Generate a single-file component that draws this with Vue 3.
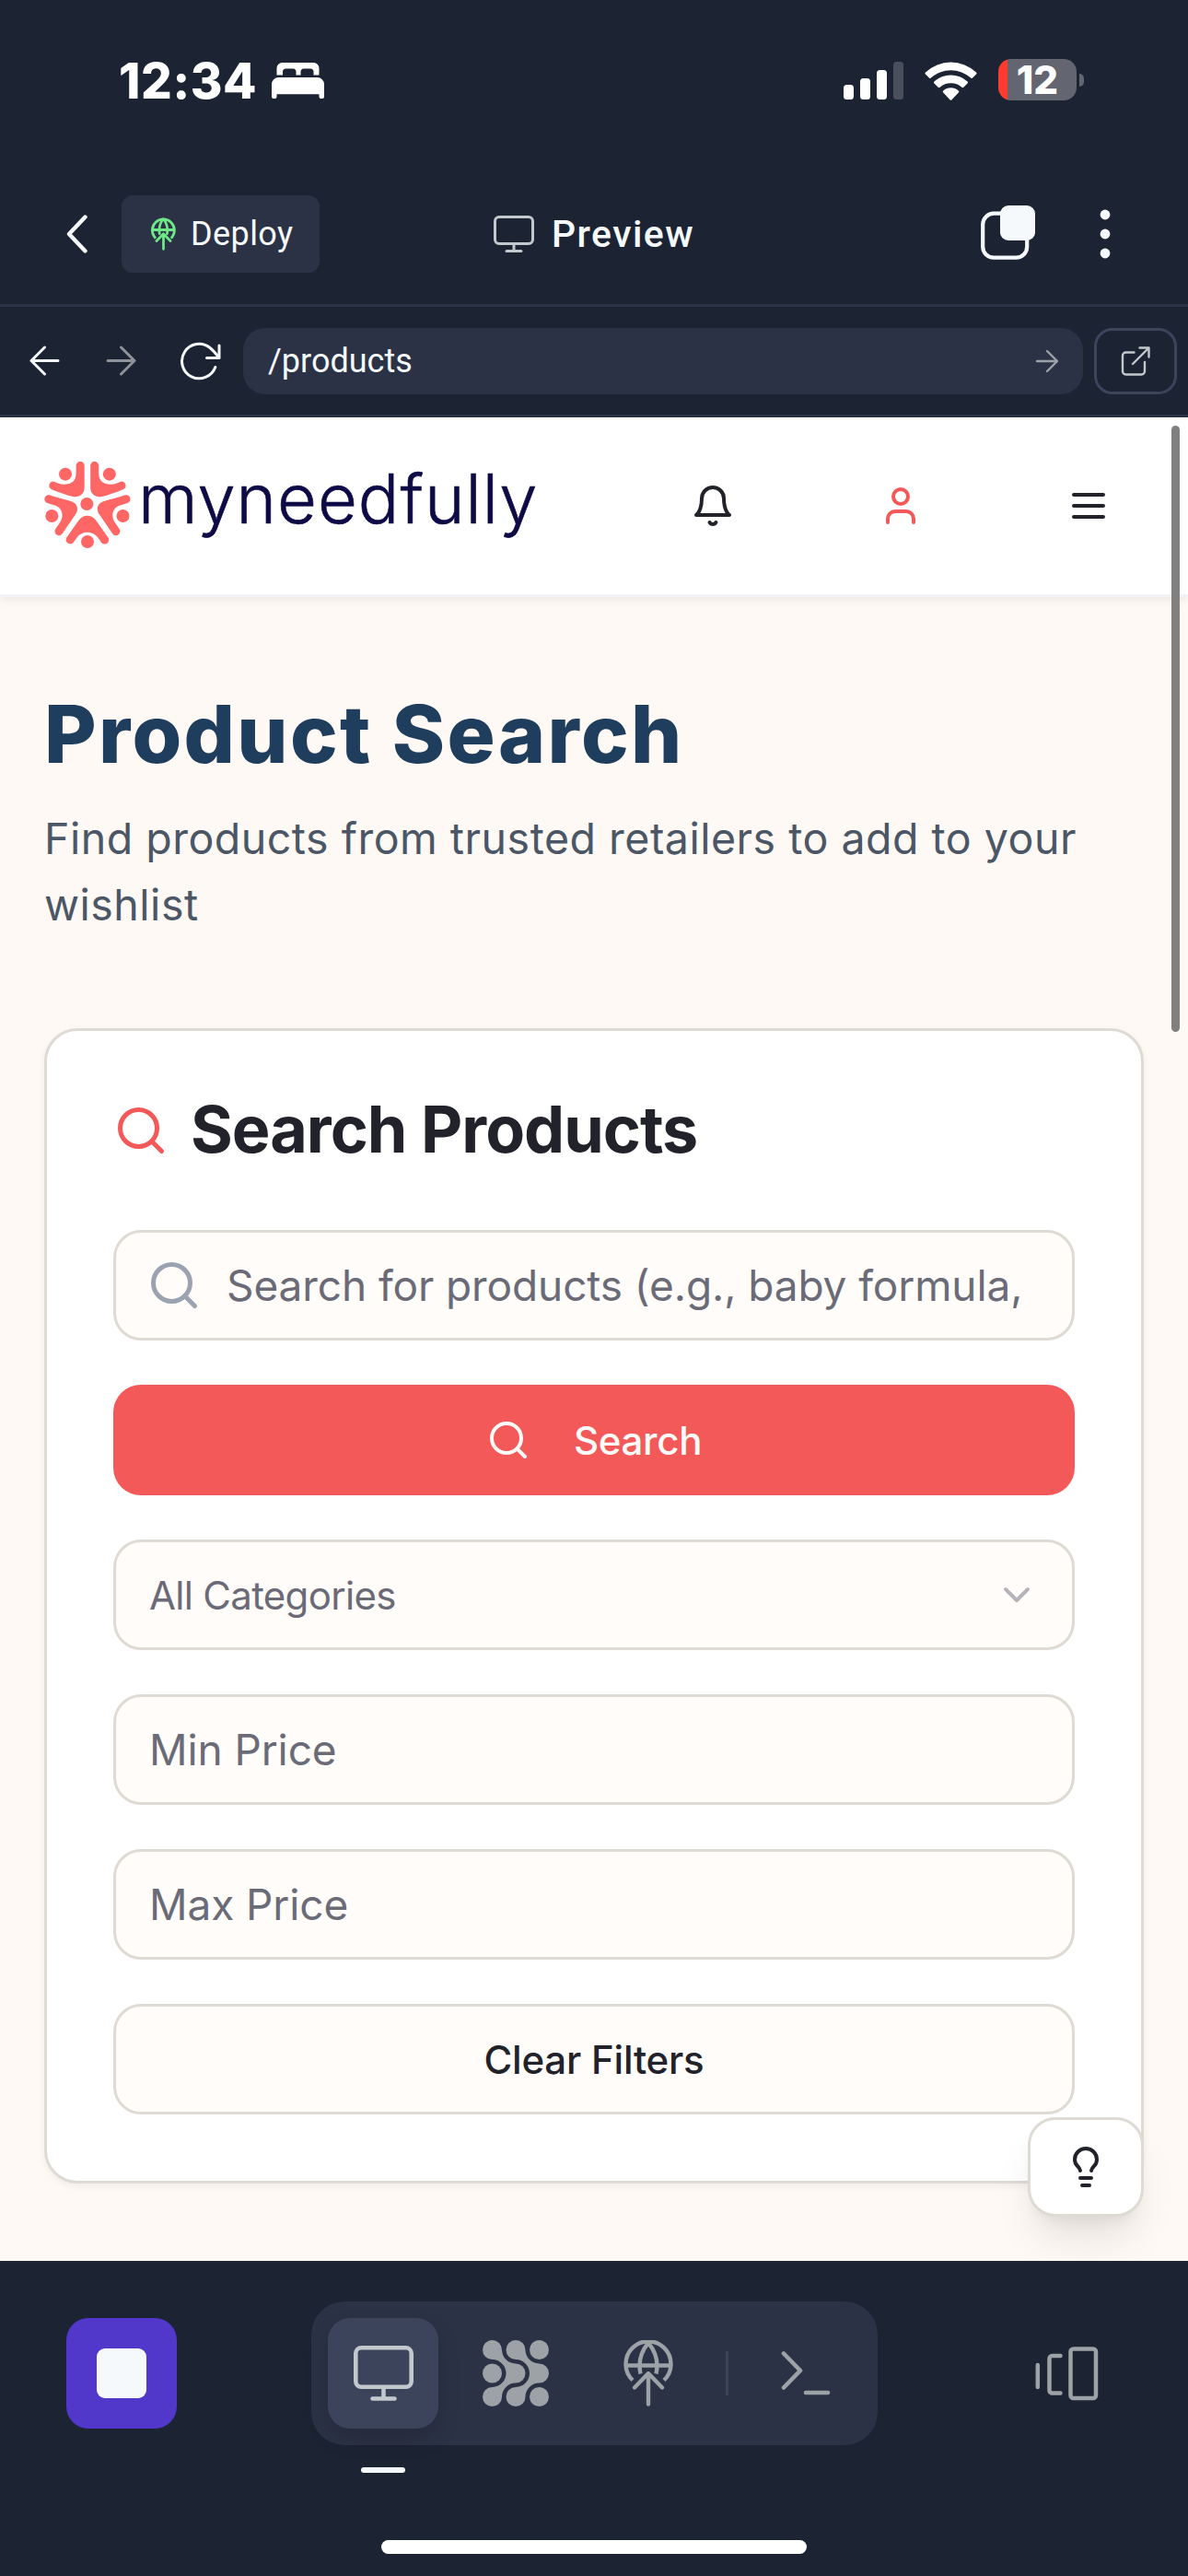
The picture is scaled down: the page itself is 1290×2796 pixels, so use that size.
<script setup>
const priceFields = ['Min Price', 'Max Price']
const signal = [
  { h: 16, on: true },
  { h: 23, on: true },
  { h: 32, on: true },
  { h: 41, on: false },
]
</script>

<template>
  <div class="phone">
    <!-- System status -->
    <div class="status">
      <span class="time">12:34</span>
      <svg class="bed" width="57" height="40" viewBox="0 0 57 40" fill="#fff">
        <path d="M5.5 13.500V6a6 6 0 0 1 6-6h34a6 6 0 0 1 6 6v7.500h-6v-3.500a3.500 3.500 0 0 0-3.500-3.500h-7a3.500 3.500 0 0 0-3.500 3.500v3.500h-5v-3.500a3.500 3.500 0 0 0-3.500-3.500h-7.500a3.500 3.500 0 0 0-3.500 3.500v3.500z" />
        <path d="M0 37v-13.500a7.500 7.500 0 0 1 7.500-7.500h42a7.500 7.500 0 0 1 7.500 7.500v13.500a2 2 0 0 1-2 2h-1.500a2 2 0 0 1-2-2v-2.700h-46v2.700a2 2 0 0 1-2 2h-1.500a2 2 0 0 1-2-2z" />
      </svg>
      <div class="signal">
        <i v-for="s in signal" :key="s.h" :class="{ off: !s.on }" :style="{ height: s.h + 'px' }"></i>
      </div>
      <svg class="wifi" width="57" height="42" viewBox="0 0 57 42" fill="#fff">
        <path d="M1 11.500a40 40 0 0 1 55 0a1.300 1.300 0 0 1 .1 1.900l-4 4.200a1.300 1.300 0 0 1-1.900 0a32.500 32.500 0 0 0-43.400 0a1.300 1.300 0 0 1-1.900 0l-4-4.200a1.300 1.300 0 0 1 .1-1.900z" />
        <path d="M10.500 21.600a26.500 26.500 0 0 1 36 0a1.300 1.300 0 0 1 0 1.900l-4.200 4.300a1.400 1.400 0 0 1-1.900 0a18 18 0 0 0-23.800 0a1.400 1.400 0 0 1-1.900 0l-4.200-4.300a1.300 1.300 0 0 1 0-1.900z" />
        <path d="M20.200 31.500a12.500 12.500 0 0 1 16.600 0a1.300 1.300 0 0 1 0 1.900l-7.300 7.800a1.400 1.400 0 0 1-2 0l-7.300-7.800a1.300 1.300 0 0 1 0-1.900z" />
      </svg>
      <div class="battery"><span>12</span></div>
      <i class="nub"></i>
    </div>

    <!-- App header -->
    <div class="apphead">
      <div class="side">
        <svg width="24" height="42" viewBox="0 0 24 42" class="line" stroke="#f5f9fc" stroke-width="4.400"><path d="M20.500 2.500L3 21l17.500 18.500" /></svg>
        <button class="deploy">
          <svg width="27" height="36" viewBox="0 0 54 72" class="line" stroke="#6ee787" stroke-width="5.600">
            <path d="M8.500 43.500a24 24 0 1 1 36.500 0M3 27h48M18.500 35c-2-12 1-23 8.200-32c7.200 9 10.200 20 8.200 32M12 51l15-15.500l15 15.500M27 36v32.500" />
          </svg>
          <span>Deploy</span>
        </button>
      </div>
      <div class="title">
        <svg width="44" height="41" viewBox="0 0 44 41" class="line" stroke="#c2c8cc" stroke-width="3"><rect x="1.500" y="1.500" width="41" height="29" rx="4.500" /><path d="M22 30.500v8M14 38.500h16" /></svg>
        <span>Preview</span>
      </div>
      <div class="side right">
        <svg width="59" height="60" viewBox="0 0 59 60">
          <rect x="2.200" y="8.700" width="48" height="48" rx="12" fill="none" stroke="#f5f9fc" stroke-width="4.200" />
          <rect x="21" y="0" width="38" height="38" rx="9" fill="#f5f9fc" />
        </svg>
        <svg width="12" height="54" viewBox="0 0 12 54" fill="#f5f9fc"><circle cx="6" cy="6" r="5.400" /><circle cx="6" cy="27" r="5.400" /><circle cx="6" cy="48" r="5.400" /></svg>
      </div>
    </div>

    <!-- Address bar -->
    <div class="toolbar">
      <svg width="33" height="33" viewBox="0 0 33 33" class="line" stroke="#f5f9fc" stroke-width="3"><path d="M16.500 2L2 16.500l14.500 14.500M2 16.500h29" /></svg>
      <svg class="line fwd" width="33" height="33" viewBox="0 0 33 33" stroke="#8f9298" stroke-width="3"><path d="M16.500 2L31 16.500l-14.500 14.500M31 16.500h-29" /></svg>
      <svg class="line reload" width="45" height="42" viewBox="0 0 45 42" stroke="#f5f9fc" stroke-width="3"><path d="M38.800 27.500A18.700 18.700 0 1 1 33 6.500c3.500 2.700 6.500 6.500 10 11M43 4v13.500h-13.500" /></svg>
      <div class="url">
        <span>/products</span>
        <svg width="26" height="26" viewBox="0 0 26 26" class="line" stroke="#9da2a6" stroke-width="2.400"><path d="M13 2l11 11l-11 11M24 13h-22" /></svg>
      </div>
      <button class="open">
        <svg width="32" height="32" viewBox="0 0 32 32" class="line" stroke="#c2c8cc" stroke-width="2.400"><path d="M14.500 6.500h-9a3.500 3.500 0 0 0-3.500 3.500v17a3.500 3.500 0 0 0 3.500 3.500h17a3.500 3.500 0 0 0 3.500-3.500v-10M13 19l17.500-17.500M20.500 1.500h10v10" /></svg>
      </button>
    </div>

    <!-- Previewed site -->
    <div class="site">
      <header class="sitehead">
        <div class="brand">
          <svg width="94" height="94" viewBox="54 63 282 282" fill="#ff6666">
            <g id="arm">
              <path d="M158 76a13.500 13.500 0 0 1 27 0v72c0 22-18 33-38 29c-12-2-48-15-70-24a13.500 13.500 0 0 1 9-25c10 3 18 9 32 9c26 0 40-11 40-38z" />
              <path d="M71 172c25 8 50 14 72 21c20 7 24 26 13 42l-43 63a13.500 13.500 0 0 1-22-16l14-20c16-24 6-52-20-57l-23-8a13.500 13.500 0 0 1 9-25z" />
              <circle cx="123" cy="104" r="21" /><circle cx="79" cy="240" r="21" />
            </g>
            <use href="#arm" transform="translate(389.500 0) scale(-1 1)" />
            <path d="M128 309l38-54c14-21 43-21 57 0l39 55a13.500 13.500 0 0 1-22 16l-10-14c-17-24-53-25-70-1l-11 15a13.500 13.500 0 0 1-21-17z" />
            <circle cx="193" cy="201" r="21" /><circle cx="195" cy="324" r="21" />
          </svg>
          <span>myneedfully</span>
        </div>
        <svg width="48" height="48" viewBox="0 0 24 24" class="line" stroke="#22222a" stroke-width="2"><path d="M6 8a6 6 0 0 1 12 0c0 7 3 9 3 9H3s3-2 3-9M10.300 21a1.940 1.940 0 0 0 3.400 0" /></svg>
        <svg width="48" height="48" viewBox="0 0 24 24" class="line" stroke="#f35959" stroke-width="2"><path d="M19 21v-2a4 4 0 0 0-4-4H9a4 4 0 0 0-4 4v2" /><circle cx="12" cy="7" r="4" /></svg>
        <svg width="48" height="48" viewBox="0 0 24 24" class="line" stroke="#22222a" stroke-width="2"><path d="M4 12h16M4 6h16M4 18h16" /></svg>
      </header>

      <main>
        <h1>Product Search</h1>
        <p>Find products from trusted retailers to add to your wishlist</p>

        <section class="card">
          <h2>
            <svg width="60" height="60" viewBox="0 0 24 24" class="line" stroke="#f35959" stroke-width="2"><circle cx="11" cy="11" r="8" /><path d="M21 21l-4.300-4.300" /></svg>
            <span>Search Products</span>
          </h2>
          <div class="field query">
            <svg width="60" height="60" viewBox="0 0 24 24" class="line" stroke="#9ca3b0" stroke-width="2"><circle cx="11" cy="11" r="8" /><path d="M21 21l-4.300-4.300" /></svg>
            <span>Search for products (e.g., baby formula,</span>
          </div>
          <button class="field primary">
            <svg width="48" height="48" viewBox="0 0 24 24" class="line" stroke="#fffcfa" stroke-width="2"><circle cx="11" cy="11" r="8" /><path d="M21 21l-4.300-4.300" /></svg>
            <span>Search</span>
          </button>
          <div class="field select">
            <span>All Categories</span>
            <svg width="48" height="48" viewBox="0 0 24 24" class="line" stroke="#b3b3b9" stroke-width="2"><path d="M6 9l6 6l6-6" /></svg>
          </div>
          <div v-for="f in priceFields" :key="f" class="field"><span>{{ f }}</span></div>
          <button class="field clear">Clear Filters</button>
        </section>
      </main>

      <button class="tip">
        <svg width="48" height="48" viewBox="0 0 24 24" class="line" stroke="#22222a" stroke-width="2"><path d="M15 14c.2-1 .7-1.700 1.500-2.500c1-.9 1.500-2.200 1.500-3.500A6 6 0 0 0 6 8c0 1 .2 2.200 1.500 3.500c.7.700 1.300 1.500 1.500 2.500M9 18h6M10 22h4" /></svg>
      </button>
      <i class="scroll"></i>
    </div>

    <!-- Bottom navigation -->
    <div class="dock">
      <div class="tools">
        <button class="stop"><i></i></button>
        <div class="tabs">
          <div class="tab active">
            <svg width="65" height="61" viewBox="0 0 65 61" class="line" stroke="#c2c8cc" stroke-width="4.600"><rect x="2.300" y="2.300" width="60.400" height="42.500" rx="6" /><path d="M32.500 45v12M20.500 57.500h24" /></svg>
            <i class="mark"></i>
          </div>
          <div class="tab">
            <svg width="72" height="72" viewBox="0 0 72 72" fill="#9da2a6">
              <path id="wave" d="M21 10.500A15 15 0 0 0 36 25.500A10.500 10.500 0 0 1 36 46.500A15 15 0 0 0 21 61.500A10.500 10.500 0 1 1 10.500 51A15 15 0 0 0 10.500 21A10.500 10.500 0 1 1 21 10.500z" />
              <use href="#wave" x="25.500" />
              <circle cx="10.500" cy="36" r="10.500" /><circle cx="61.500" cy="10.500" r="10.500" /><circle cx="61.500" cy="61.500" r="10.500" />
            </svg>
          </div>
          <div class="tab">
            <svg width="54" height="72" viewBox="0 0 54 72" class="line" stroke="#9da2a6" stroke-width="4.400">
              <path class="butt" d="M10 43.500a24.500 24.500 0 1 1 34 0M3 27.500h48M18.500 36.500c-2.600-12.500 .5-24 8.500-33.500c8 9.500 11.100 21 8.500 33.500" />
              <path d="M12 51.500l15-15.500l15 15.500M27 37v32.500" />
            </svg>
          </div>
          <i class="divider"></i>
          <div class="tab">
            <svg width="54" height="48" viewBox="0 0 54 48" class="line" stroke="#9da2a6" stroke-width="4.600"><path d="M3 2.500l18 18.500l-18 18.500M27 45h24" /></svg>
          </div>
        </div>
        <svg class="line layout" width="69" height="59" viewBox="0 0 69 59" stroke="#9da2a6" stroke-width="4.500"><rect x="38.500" y="2.500" width="27.500" height="53.500" rx="3" /><path d="M27.500 10h-9a3 3 0 0 0-3 3v34.500a3 3 0 0 0 3 3h9M2.800 20v24" /></svg>
      </div>
      <i class="home"></i>
    </div>
  </div>
</template>

<style>
body {
  margin: 0;
  background: #1c2333;
}
</style>

<style scoped>
* {
  box-sizing: border-box;
}
.phone {
  width: 1290px;
  height: 2796px;
  display: flex;
  flex-direction: column;
  overflow: hidden;
  background: #1c2333;
  font-family: Inter, "Noto Sans", sans-serif;
}
button {
  padding: 0;
  border: 0;
  background: none;
  font: inherit;
}
svg {
  display: block;
  flex: none;
}
.line {
  fill: none;
  stroke-linecap: round;
  stroke-linejoin: round;
}
.butt {
  stroke-linecap: butt;
}

/* status */
.status {
  height: 178px;
  padding: 0 113px 0 129px;
  display: flex;
  align-items: center;
  color: #fff;
}
.time {
  width: 166px;
  font-size: 53px;
  line-height: 60px;
  font-weight: 800;
  letter-spacing: 0.6px;
}
.bed,
.signal,
.wifi {
  margin-top: -3px;
}
.time {
  margin-top: -2px;
}
.signal {
  margin-left: auto;
  height: 41px;
  display: flex;
  align-items: flex-end;
  gap: 7px;
}
.signal i {
  width: 11px;
  border-radius: 3.5px;
  background: #fff;
}
.signal .off {
  background: #4a4f5c;
}
.wifi {
  margin-left: 23px;
}
.battery {
  width: 85px;
  height: 45px;
  margin: -5px 3px 0 23px;
  border-radius: 14px;
  background: linear-gradient(to right, #ff3b30 10px, #636670 10px);
  display: flex;
  align-items: center;
  justify-content: center;
  font-size: 42px;
  font-weight: 800;
}
.nub {
  width: 5px;
  height: 14px;
  margin-top: -5px;
  border-radius: 0 5px 5px 0;
  background: #636670;
}

/* app header */
.apphead {
  height: 155px;
  padding: 0 84px 0 72px;
  border-bottom: 3px solid #2b3245;
  display: flex;
  align-items: center;
  font-family: Roboto, "Noto Sans", sans-serif;
  color: #f5f9fc;
}
.side {
  flex: 1;
  display: flex;
  align-items: center;
  gap: 36px;
}
.right {
  justify-content: flex-end;
  gap: 70px;
}
.right svg:first-child {
  margin-top: -2px;
}
.deploy {
  width: 215px;
  height: 84px;
  border-radius: 12px;
  background: #2b3245;
  color: #f5f9fc;
  display: flex;
  align-items: center;
  padding-left: 32px;
  gap: 16px;
  font-size: 36px;
  letter-spacing: 0.4px;
}
.title {
  display: flex;
  align-items: center;
  gap: 19px;
  margin-left: 12px;
  font-size: 41px;
  font-weight: 500;
  letter-spacing: 1.4px;
}

/* address bar */
.toolbar {
  height: 120px;
  padding: 0 12px 0 32px;
  border-bottom: 3px solid #2b3245;
  display: flex;
  align-items: center;
  font-family: Roboto, "Noto Sans", sans-serif;
}
.fwd {
  margin-left: 50px;
}
.reload {
  margin-left: 47px;
}
.url {
  flex: 1;
  height: 72px;
  margin-left: 24px;
  padding: 0 26px 0 27px;
  border-radius: 24px;
  background: #2b3245;
  display: flex;
  align-items: center;
  justify-content: space-between;
  color: #f5f9fc;
  font-size: 36px;
}
.open {
  width: 90px;
  height: 72px;
  margin-left: 12px;
  border: 3px solid #3c445c;
  border-radius: 20px;
  display: flex;
  align-items: center;
  justify-content: center;
}

/* site */
.site {
  position: relative;
  height: 2001px;
  overflow: hidden;
  background: #fff9f5;
}
.sitehead {
  height: 195px;
  padding: 0 84px 0 48px;
  background: #fff;
  border-bottom: 3px solid #f1f2f5;
  box-shadow: 0 3px 9px rgba(0, 0, 0, 0.07);
  display: flex;
  align-items: center;
  gap: 156px;
}
.brand {
  flex: 1;
  display: flex;
  align-items: center;
  gap: 8px;
  color: #0d0a45;
  font-size: 74px;
  line-height: 90px;
  font-weight: 300;
  letter-spacing: 1px;
}
.brand svg {
  margin-top: -2px;
}
.brand span {
  margin-top: -17px;
  -webkit-text-stroke: 0.6px #0d0a45;
}
main {
  padding: 104px 48px 0;
}
h1 {
  margin: 0;
  color: #1f3d5c;
  font-size: 87px;
  line-height: 90px;
  font-weight: 800;
  letter-spacing: 2.3px;
}
p {
  margin: 32px 0 0;
  color: #4b5666;
  font-size: 46.500px;
  line-height: 72px;
  letter-spacing: 0.5px;
}
.card {
  height: 1254px;
  margin-top: 98px;
  padding: 72px;
  border: 3px solid #dedad4;
  border-radius: 36px;
  background: #fff;
  box-shadow: 0 3px 9px rgba(0, 0, 0, 0.06);
  display: flex;
  flex-direction: column;
  gap: 48px;
}
h2 {
  height: 72px;
  margin: 0 0 24px;
  display: flex;
  align-items: center;
  gap: 24px;
  color: #22222a;
  font-size: 70px;
  font-weight: 650;
  letter-spacing: -1px;
}
h2 span {
  margin-top: -3px;
}
.field {
  flex: none;
  width: 100%;
  height: 120px;
  padding: 0 36px;
  border: 3px solid #dedad4;
  border-radius: 30px;
  background: #fffcfa;
  color: #6b6b78;
  display: flex;
  align-items: center;
  font-size: 46px;
  letter-spacing: -0.1px;
  white-space: nowrap;
}
.query {
  padding-left: 33px;
  gap: 27px;
}
.primary {
  border: 0;
  background: #f35959;
  color: #fffcfa;
  justify-content: center;
  gap: 47px;
  font-size: 42px;
  font-weight: 500;
  letter-spacing: -0.3px;
}
.select {
  justify-content: space-between;
  font-size: 42px;
  letter-spacing: -0.7px;
}
.clear {
  justify-content: center;
  color: #22222a;
  font-size: 42px;
  font-weight: 500;
  letter-spacing: -0.2px;
}
.tip {
  position: absolute;
  right: 48px;
  bottom: 48px;
  width: 126px;
  height: 108px;
  border: 3px solid #dedad4;
  border-radius: 30px;
  background: #fff;
  box-shadow: 0 30px 45px -9px rgba(0, 0, 0, 0.1), 0 12px 18px -12px rgba(0, 0, 0, 0.1);
  display: flex;
  align-items: center;
  justify-content: center;
}
.scroll {
  position: absolute;
  top: 9px;
  right: 9px;
  width: 9px;
  height: 658px;
  border-radius: 5px;
  background: #808080;
}

/* dock */
.dock {
  flex: 1;
  padding-top: 44px;
  display: flex;
  flex-direction: column;
  align-items: center;
}
.tools {
  width: 100%;
  padding: 0 97px 0 72px;
  display: flex;
  align-items: center;
}
.stop {
  width: 120px;
  height: 120px;
  border-radius: 24px;
  background: #5138cb;
  display: flex;
  align-items: center;
  justify-content: center;
}
.stop i {
  width: 54px;
  height: 54px;
  border-radius: 9px;
  background: #f5f9fc;
}
.tabs {
  width: 615px;
  height: 156px;
  margin-left: 146px;
  padding: 0 18px;
  border-radius: 36px;
  background: #2b3245;
  display: flex;
  align-items: center;
  gap: 24px;
}
.tab {
  position: relative;
  width: 120px;
  height: 120px;
  border-radius: 24px;
  display: flex;
  align-items: center;
  justify-content: center;
}
.active {
  background: #3c445c;
  box-shadow: 0 12px 24px rgba(2, 2, 3, 0.14);
}
.mark {
  position: absolute;
  left: 36px;
  top: 162px;
  width: 48px;
  height: 6px;
  border-radius: 3px;
  background: #f5f9fc;
}
.divider {
  width: 3px;
  height: 48px;
  background: #3c445c;
}
.layout {
  margin-left: auto;
}
.home {
  width: 462px;
  height: 15px;
  margin-top: 103px;
  border-radius: 8px;
  background: #fff;
}
</style>
